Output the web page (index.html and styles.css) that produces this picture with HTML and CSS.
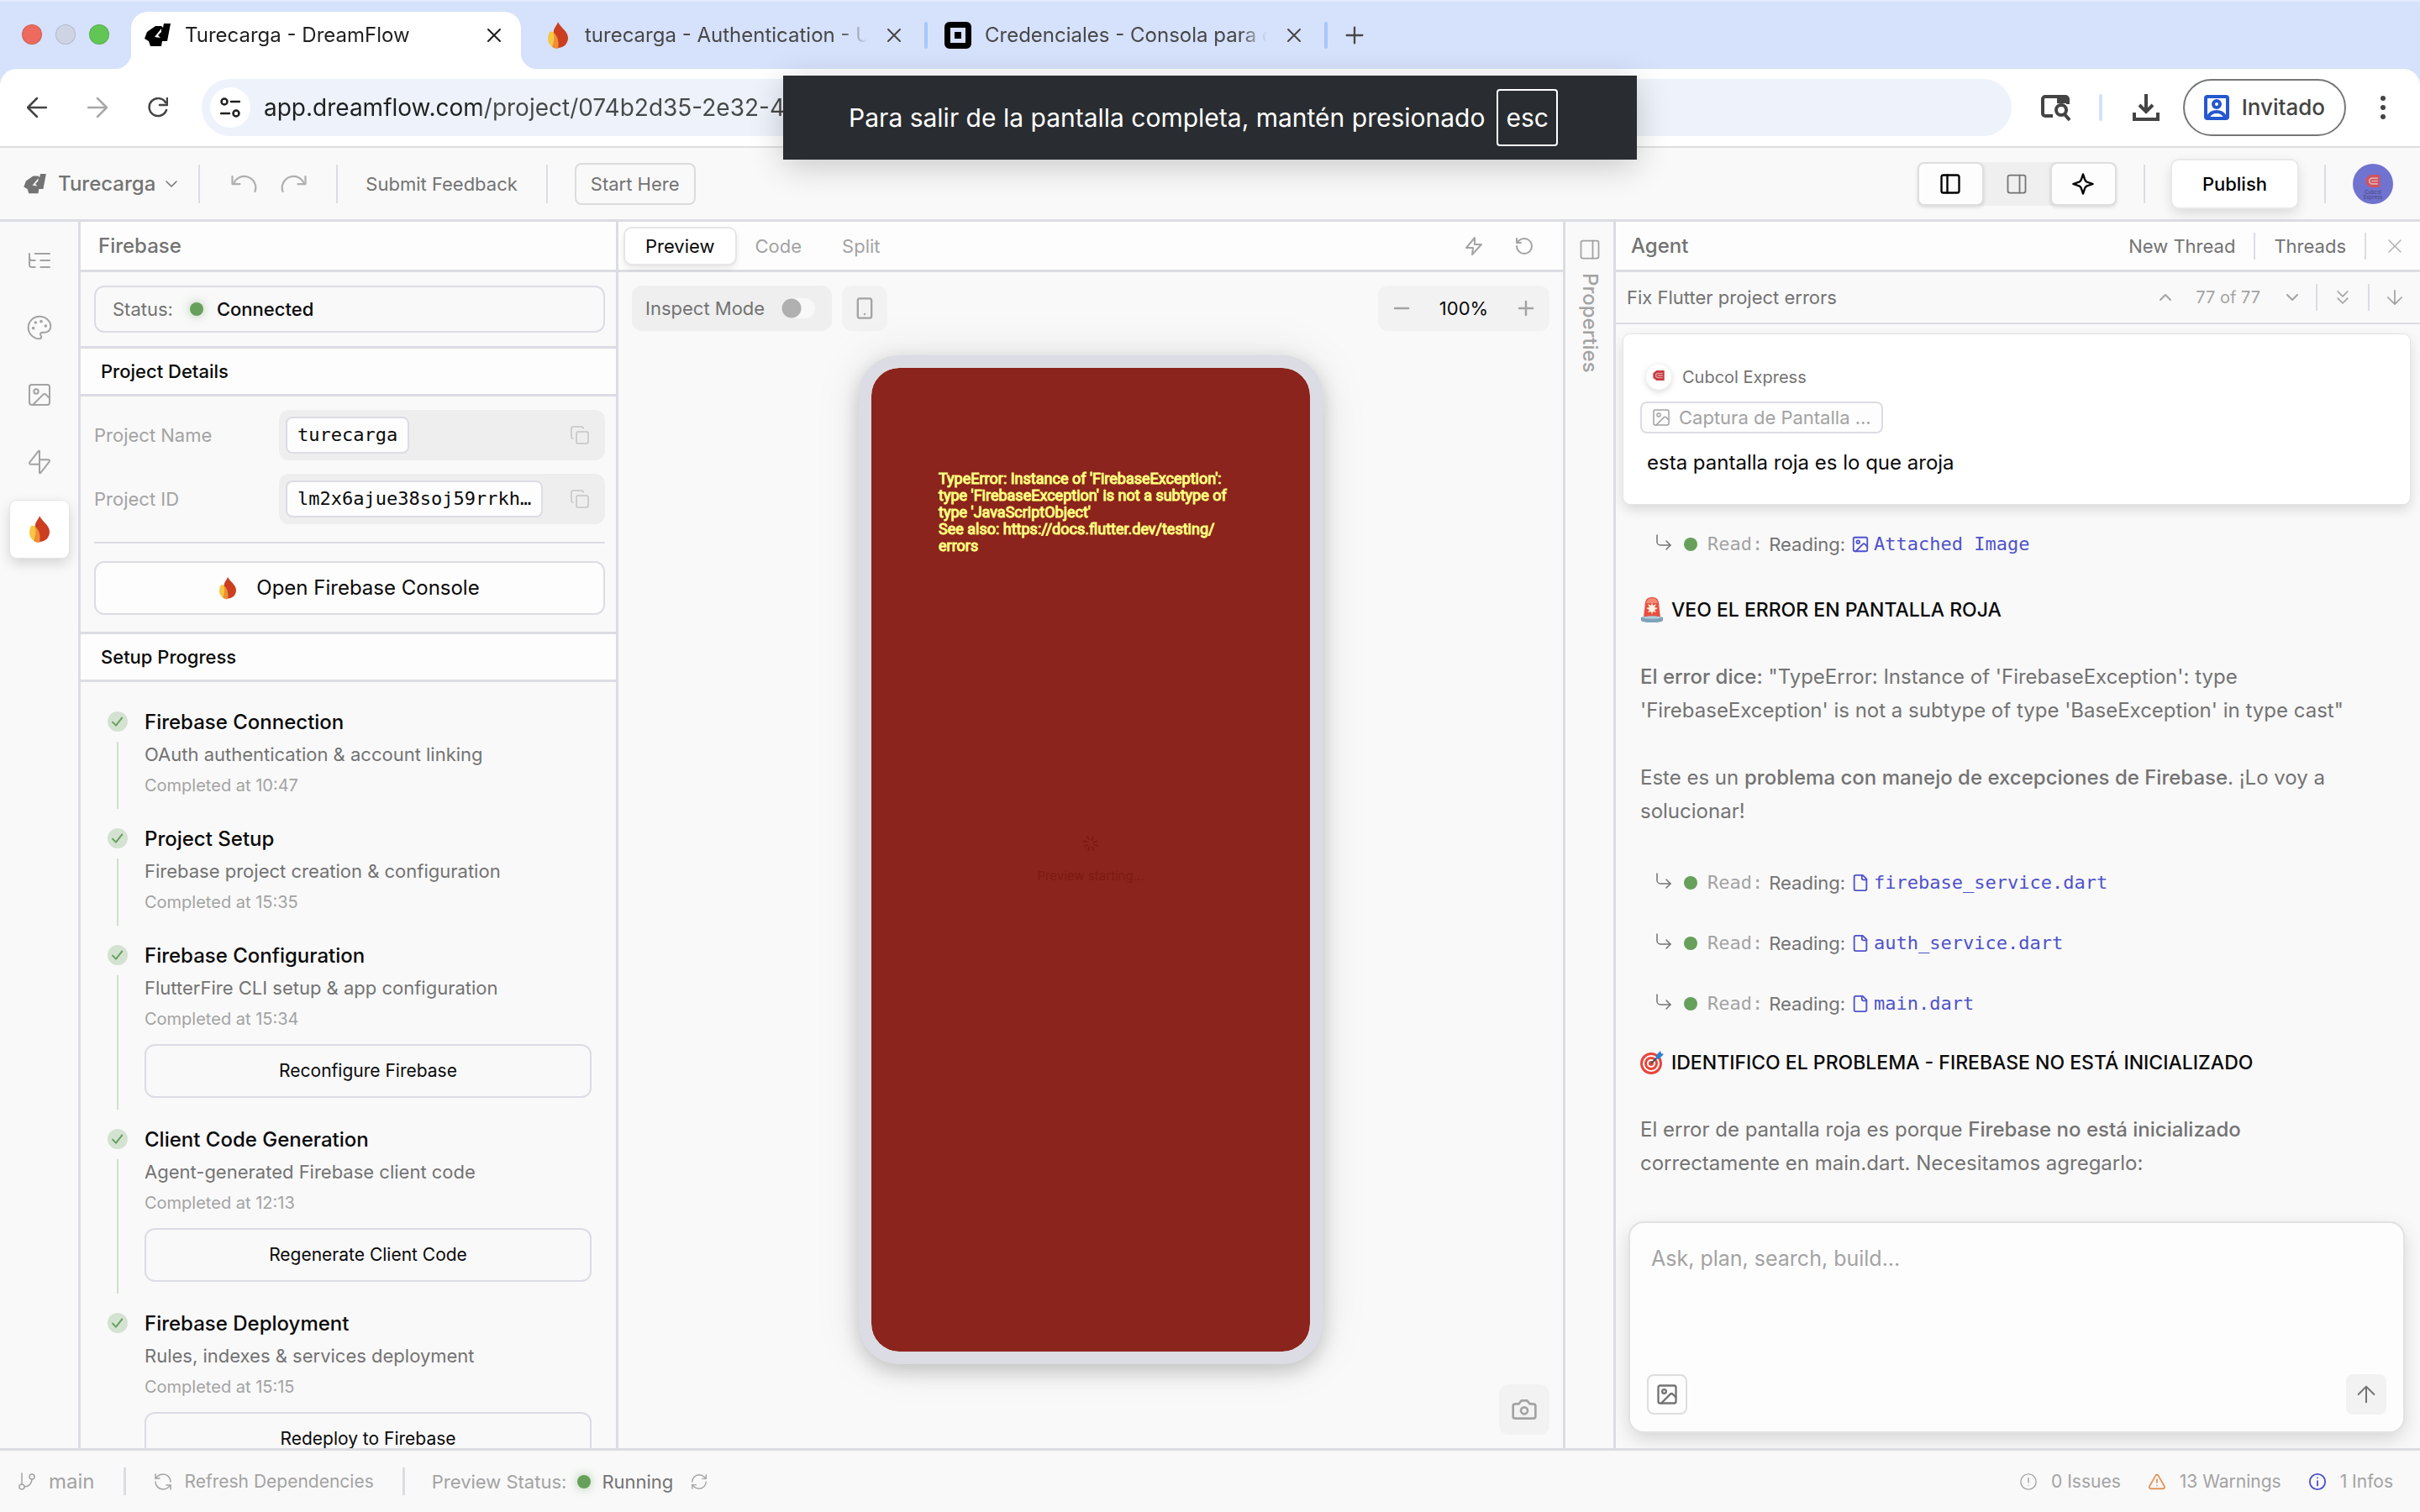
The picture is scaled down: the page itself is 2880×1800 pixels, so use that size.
FILE: index.html
```html
<!DOCTYPE html>
<html lang="es">
<head>
<meta charset="utf-8">
<title>Turecarga - DreamFlow</title>
<meta name="viewport" content="width=device-width, initial-scale=1">
<link rel="stylesheet" href="styles.css">
</head>
<body>
<svg class="sprite" aria-hidden="true">
  <symbol id="logo" viewBox="0 0 32 28"><path fill="currentColor" fill-rule="evenodd" d="M23 0h8l-4 21h-6l-1 6H7l-2-6-5-3L3 10l10-7h7l2 2zM20 6l-8 10 7 1-3-3 4-4z"/></symbol>
  <symbol id="flame" viewBox="0 0 24 32"><path fill="#f6c644" d="M2 12c3-1 7 0 9 3s3 11 1 17C5 31 0 27 0 20c0-3 1-6 2-8z"/><path fill="#cb3f20" d="M12 0c-1 5-6 7-5 14 3 3 5 9 5 17 7 0 12-5 12-12C24 11 15 7 12 0z"/><path fill="#ee8f35" d="M7 13c4 3 7 10 5 19-3 0-5-1-7-2 2-5 3-11 2-17z"/></symbol>
  <symbol id="close" viewBox="0 0 24 24"><path d="M5 5l14 14M19 5L5 19"/></symbol>
  <symbol id="plus" viewBox="0 0 24 24"><path d="M4 12h16M12 4v16"/></symbol>
  <symbol id="minus" viewBox="0 0 24 24"><path d="M4 12h16"/></symbol>
  <symbol id="back" viewBox="0 0 24 24"><path d="M23 12H2M12 1L1 12l11 11"/></symbol>
  <symbol id="forward" viewBox="0 0 24 24"><path d="M1 12h21M12 1l11 11-11 11"/></symbol>
  <symbol id="reload" viewBox="0 0 24 24"><path d="M22 15a10.500 10.500 0 1 1-1-9M23 0v9h-9"/></symbol>
  <symbol id="tune" viewBox="0 0 24 24"><circle cx="5" cy="5" r="3.500"/><path d="M13 5h10M1 19h10"/><circle cx="19" cy="19" r="3.500"/></symbol>
  <symbol id="tabsearch" viewBox="0 0 36 32"><path d="M15 26H6a3 3 0 0 1-3-3V6a3 3 0 0 1 3-3h24a3 3 0 0 1 3 3v6"/><path fill="currentColor" stroke="none" d="M20 3h14v8H20z"/><circle cx="25" cy="19" r="6"/><path d="M29 24l6 7"/></symbol>
  <symbol id="download" viewBox="0 0 32 32"><path d="M16 0v20M8 13l8 8 8-8M2 22v8h28v-8"/></symbol>
  <symbol id="guest" viewBox="0 0 30 30"><rect x="2" y="2" width="26" height="26" rx="2"/><circle cx="15" cy="11" r="4"/><path d="M5 26c4-8 16-8 20 0"/></symbol>
  <symbol id="dots" viewBox="0 0 8 28"><g fill="currentColor" stroke="none"><circle cx="4" cy="3" r="3"/><circle cx="4" cy="14" r="3"/><circle cx="4" cy="25" r="3"/></g></symbol>
  <symbol id="chevdown" viewBox="0 0 24 24"><path d="M6 9l6 6 6-6"/></symbol>
  <symbol id="chevup" viewBox="0 0 24 24"><path d="M6 15l6-6 6 6"/></symbol>
  <symbol id="chevs" viewBox="0 0 24 24"><path d="M7 6l5 5 5-5M7 13l5 5 5-5"/></symbol>
  <symbol id="arrowdown" viewBox="0 0 24 24"><path d="M12 5v14M19 12l-7 7-7-7"/></symbol>
  <symbol id="arrowup" viewBox="0 0 24 24"><path d="M12 19V5M5 12l7-7 7 7"/></symbol>
  <symbol id="undo" viewBox="0 0 24 24"><path d="M3 6v6h6"/><path d="M21 18a9 9 0 0 0-17-6"/></symbol>
  <symbol id="redo" viewBox="0 0 24 24"><path d="M21 6v6h-6"/><path d="M3 18a9 9 0 0 1 17-6"/></symbol>
  <symbol id="panelleft" viewBox="0 0 24 24"><rect x="3" y="3" width="18" height="18" rx="2"/><path d="M9 3v18"/></symbol>
  <symbol id="panelright" viewBox="0 0 24 24"><rect x="3" y="3" width="18" height="18" rx="2"/><path d="M15 3v18"/></symbol>
  <symbol id="sparkle" viewBox="0 0 24 24"><path d="M12 2l2 6a4 4 0 0 0 2 2l6 2-6 2a4 4 0 0 0-2 2l-2 6-2-6a4 4 0 0 0-2-2l-6-2 6-2a4 4 0 0 0 2-2z"/></symbol>
  <symbol id="tree" viewBox="0 0 24 24"><path d="M21 12h-8M21 6H8M21 18h-8M3 6v4c0 1.100.9 2 2 2h3M3 10v6c0 1.100.9 2 2 2h3"/></symbol>
  <symbol id="palette" viewBox="0 0 24 24"><circle cx="13.500" cy="6.500" r=".6"/><circle cx="17.500" cy="10.500" r=".6"/><circle cx="8.500" cy="7.500" r=".6"/><circle cx="6.500" cy="12.500" r=".6"/><path d="M12 2C6.500 2 2 6.500 2 12s4.500 10 10 10c.93 0 1.650-.75 1.650-1.690 0-.44-.18-.83-.44-1.120-.29-.29-.44-.65-.44-1.130a1.640 1.640 0 0 1 1.670-1.670h2c3.050 0 5.550-2.500 5.550-5.550C21.970 6.010 17.460 2 12 2z"/></symbol>
  <symbol id="image" viewBox="0 0 24 24"><rect x="3" y="3" width="18" height="18" rx="2"/><circle cx="9" cy="9" r="2"/><path d="M21 15l-3.100-3.100a2 2 0 0 0-2.800 0L6 21"/></symbol>
  <symbol id="bolts" viewBox="0 0 24 24"><path d="M12 14H4a1 1 0 0 1-.78-1.630L11 2.400a.5.5 0 0 1 1 .3zM12 10h8a1 1 0 0 1 .78 1.630L13 21.600a.5.5 0 0 1-1-.3zM12 10v4"/></symbol>
  <symbol id="bolt" viewBox="0 0 24 24"><path d="M13 2L3 14h8l-1 8 11-12h-8z"/></symbol>
  <symbol id="ccw" viewBox="0 0 24 24"><path d="M3 12a9 9 0 1 0 9-9 9.750 9.750 0 0 0-6.740 2.740L3 8"/><path d="M3 3v5h5"/></symbol>
  <symbol id="copy" viewBox="0 0 24 24"><rect x="8" y="8" width="14" height="14" rx="2"/><path d="M4 16c-1.100 0-2-.9-2-2V4c0-1.100.9-2 2-2h10c1.100 0 2 .9 2 2"/></symbol>
  <symbol id="check" viewBox="0 0 24 24"><path d="M20 5L9 19l-6-6"/></symbol>
  <symbol id="phone" viewBox="0 0 24 24"><rect x="5" y="2" width="14" height="20" rx="2"/><path d="M12 18h.01"/></symbol>
  <symbol id="camera" viewBox="0 0 24 24"><path d="M14.500 4h-5L7 7H4a2 2 0 0 0-2 2v9a2 2 0 0 0 2 2h16a2 2 0 0 0 2-2V9a2 2 0 0 0-2-2h-3z"/><circle cx="12" cy="13" r="3"/></symbol>
  <symbol id="file" viewBox="0 0 24 24"><path d="M15 2H6a2 2 0 0 0-2 2v16a2 2 0 0 0 2 2h12a2 2 0 0 0 2-2V7z"/><path d="M14 2v4a2 2 0 0 0 2 2h4"/></symbol>
  <symbol id="corner" viewBox="0 0 24 24"><path d="M15 8l5 5-5 5"/><path d="M4 1v8a4 4 0 0 0 4 4h12"/></symbol>
  <symbol id="branch" viewBox="0 0 24 24"><path d="M6 2v13"/><circle cx="18" cy="6" r="3"/><circle cx="6" cy="18" r="3"/><path d="M18 9a9 9 0 0 1-9 9"/></symbol>
  <symbol id="refreshccw" viewBox="0 0 24 24"><path d="M21 12a9 9 0 0 0-9-9 9.750 9.750 0 0 0-6.740 2.740L3 8"/><path d="M3 3v5h5M3 12a9 9 0 0 0 9 9 9.750 9.750 0 0 0 6.740-2.740L21 16"/><path d="M16 16h5v5"/></symbol>
  <symbol id="refreshcw" viewBox="0 0 24 24"><path d="M3 12a9 9 0 0 1 9-9 9.750 9.750 0 0 1 6.740 2.740L21 8"/><path d="M21 3v5h-5M21 12a9 9 0 0 1-9 9 9.750 9.750 0 0 1-6.740-2.740L3 16"/><path d="M8 16H3v5"/></symbol>
  <symbol id="alert" viewBox="0 0 24 24"><circle cx="12" cy="12" r="10"/><path d="M12 7v6M12 17h.01"/></symbol>
  <symbol id="warn" viewBox="0 0 24 24"><path d="M21.700 18l-8-14a2 2 0 0 0-3.500 0l-8 14A2 2 0 0 0 4 21h16a2 2 0 0 0 1.700-3zM12 9v4M12 17h.01"/></symbol>
  <symbol id="info" viewBox="0 0 24 24"><circle cx="12" cy="12" r="10"/><path d="M12 17v-6M12 7h.01"/></symbol>
  <symbol id="spinner" viewBox="0 0 24 24"><path d="M15 4l-1 4M20 9l-4 2M21 15l-4-1M16 21l-2-4M9 21l1-4M4 16l4-2M3 9l4 1M8 3l2 4"/></symbol>
  <symbol id="siren" viewBox="0 0 28 30"><path fill="#e8503f" d="M4 24L6 6c1-4 3-6 8-6s7 2 8 6l2 18z"/><path fill="#f58a76" d="M7 7c1-4 3-6 7-6s6 2 7 6z"/><path fill="#fff3e6" d="M14 6l1 4 4-2-2 4 4 1-4 2 2 3-4-1-1 4-1-4-4 1 2-3-4-2 4-1-2-4 4 2z"/><path fill="#7fa3bb" d="M1 24c4-2 22-2 26 0v4c-4 3-22 3-26 0z"/><path fill="#b6cedb" d="M2 24c5-2 19-2 24 0-5 2-19 2-24 0z"/></symbol>
  <symbol id="target" viewBox="0 0 28 28"><circle cx="13" cy="15" r="13" fill="#e8453a"/><circle cx="13" cy="15" r="10" fill="#fff"/><circle cx="13" cy="15" r="8" fill="#e8453a"/><circle cx="13" cy="15" r="5" fill="#fff"/><circle cx="13" cy="15" r="3" fill="#e8453a"/><path d="M13 15l8-8" stroke="#41546b" stroke-width="2"/><path fill="#2f7fd0" d="M19 5l5-5 1 3 3 1-5 5-4 1z"/></symbol>
  <symbol id="cubcol" viewBox="0 0 20 18"><path fill="currentColor" d="M6 0h14v18H6l-6-5V5z"/><path d="M17 5H8L5 7v4l3 2h9M8 9h9" fill="none" stroke="#fff" stroke-opacity=".5" stroke-width="2"/></symbol>
</svg>

<div class="app">
  <header class="browser">
    <div class="tabstrip">
      <div class="lights"><span class="light red"></span><span class="light idle"></span><span class="light green"></span></div>
      <div class="tab active"><svg class="favicon logo"><use href="#logo"/></svg><span class="tab-title">Turecarga - DreamFlow</span><button class="tab-close" aria-label="Cerrar"><svg class="ic i24 w2"><use href="#close"/></svg></button></div>
      <span class="tab-sep hidden"></span>
      <div class="tab"><svg class="favicon"><use href="#flame"/></svg><span class="tab-title">turecarga - Authentication - Usuarios</span><button class="tab-close" aria-label="Cerrar"><svg class="ic i24 w2"><use href="#close"/></svg></button></div>
      <span class="tab-sep"></span>
      <div class="tab"><span class="favicon square"></span><span class="tab-title">Credenciales - Consola para desarrolladores</span><button class="tab-close" aria-label="Cerrar"><svg class="ic i24 w2"><use href="#close"/></svg></button></div>
      <span class="tab-sep"></span>
      <button class="newtab" aria-label="Nueva pestaña"><svg class="ic i28 w2"><use href="#plus"/></svg></button>
    </div>
    <div class="toolbar">
      <button class="nav" aria-label="Atrás"><svg class="ic i24 w25"><use href="#back"/></svg></button>
      <button class="nav dim" aria-label="Adelante"><svg class="ic i24 w25"><use href="#forward"/></svg></button>
      <button class="nav" aria-label="Recargar"><svg class="ic i24 w25"><use href="#reload"/></svg></button>
      <div class="omnibox">
        <button class="site" aria-label="Información del sitio"><svg class="ic i24 w25"><use href="#tune"/></svg></button>
        <input class="url" type="text" aria-label="Dirección" value="app.dreamflow.com/project/074b2d35-2e32-4">
      </div>
      <button class="nav side" aria-label="Buscar"><svg class="ic tabsearch"><use href="#tabsearch"/></svg></button>
      <span class="bar-sep"></span>
      <button class="nav save" aria-label="Descargas"><svg class="ic i32 w4"><use href="#download"/></svg></button>
      <button class="profile"><svg class="ic guest"><use href="#guest"/></svg>Invitado</button>
      <button class="menu" aria-label="Menú"><svg class="ic dots"><use href="#dots"/></svg></button>
    </div>
    <div class="toast" role="status"><span>Para salir de la pantalla completa, mantén presionado</span><kbd>esc</kbd></div>
  </header>

  <nav class="topbar">
    <button class="project"><svg class="logo small"><use href="#logo"/></svg>Turecarga<svg class="ic i24"><use href="#chevdown"/></svg></button>
    <span class="vr"></span>
    <button class="tool undo" aria-label="Undo"><svg class="ic i36"><use href="#undo"/></svg></button>
    <button class="tool" aria-label="Redo"><svg class="ic i36"><use href="#redo"/></svg></button>
    <span class="vr"></span>
    <button class="plain">Submit Feedback</button>
    <span class="vr"></span>
    <button class="start">Start Here</button>
    <div class="segments">
      <button class="on" aria-label="Left panel"><svg class="ic i28 w2"><use href="#panelleft"/></svg></button>
      <button aria-label="Right panel"><svg class="ic i28"><use href="#panelright"/></svg></button>
      <button class="on" aria-label="Agent"><svg class="ic i28 w2"><use href="#sparkle"/></svg></button>
    </div>
    <span class="vr"></span>
    <button class="publish">Publish</button>
    <span class="vr"></span>
    <button class="avatar" aria-label="Account"><svg viewBox="0 0 48 48"><circle cx="24" cy="24" r="24" fill="#7073cf"/><use href="#cubcol" x="14" y="13" width="20" height="15" color="#cf5560"/><text x="24" y="36" text-anchor="middle" class="tiny">Cubcol</text><text x="24" y="42" text-anchor="middle" class="tiny">Express</text></svg></button>
  </nav>

  <main class="workspace">
    <aside class="rail">
      <button aria-label="Widget tree"><svg class="ic i32"><use href="#tree"/></svg></button>
      <button aria-label="Theme"><svg class="ic i32"><use href="#palette"/></svg></button>
      <button aria-label="Assets"><svg class="ic i32"><use href="#image"/></svg></button>
      <button aria-label="Backend"><svg class="ic i32"><use href="#bolts"/></svg></button>
      <button class="current" aria-label="Firebase"><svg class="flame-lg"><use href="#flame"/></svg></button>
    </aside>

    <section class="firebase">
      <h1 class="pane-head title">Firebase</h1>
      <div class="status-wrap"><div class="status"><span>Status:</span><i class="dot glow"></i><b>Connected</b></div></div>
      <h2 class="section">Project Details</h2>
      <div class="details">
        <div class="field"><span>Project Name</span><div class="value"><code>turecarga</code><button aria-label="Copy name"><svg class="ic i24"><use href="#copy"/></svg></button></div></div>
        <div class="field"><span>Project ID</span><div class="value"><code>lm2x6ajue38soj59rrkh…</code><button aria-label="Copy ID"><svg class="ic i24"><use href="#copy"/></svg></button></div></div>
        <hr>
        <button class="outline console"><svg class="flame-sm"><use href="#flame"/></svg>Open Firebase Console</button>
      </div>
      <h2 class="section">Setup Progress</h2>
      <ol class="steps">
        <li><span class="mark"><svg class="ic"><use href="#check"/></svg></span><div><h3>Firebase Connection</h3><p>OAuth authentication &amp; account linking</p><small>Completed at 10:47</small></div></li>
        <li><span class="mark"><svg class="ic"><use href="#check"/></svg></span><div><h3>Project Setup</h3><p>Firebase project creation &amp; configuration</p><small>Completed at 15:35</small></div></li>
        <li><span class="mark"><svg class="ic"><use href="#check"/></svg></span><div><h3>Firebase Configuration</h3><p>FlutterFire CLI setup &amp; app configuration</p><small>Completed at 15:34</small><button class="outline">Reconfigure Firebase</button></div></li>
        <li><span class="mark"><svg class="ic"><use href="#check"/></svg></span><div><h3>Client Code Generation</h3><p>Agent-generated Firebase client code</p><small>Completed at 12:13</small><button class="outline">Regenerate Client Code</button></div></li>
        <li><span class="mark"><svg class="ic"><use href="#check"/></svg></span><div><h3>Firebase Deployment</h3><p>Rules, indexes &amp; services deployment</p><small>Completed at 15:15</small><button class="outline">Redeploy to Firebase</button></div></li>
      </ol>
    </section>

    <section class="preview">
      <div class="pane-head tabs">
        <button class="mode on">Preview</button><button class="mode">Code</button><button class="mode">Split</button>
        <span class="grow"></span>
        <button class="act" aria-label="Hot reload"><svg class="ic i24 w2"><use href="#bolt"/></svg></button>
        <button class="act" aria-label="Restart"><svg class="ic i24 w2"><use href="#ccw"/></svg></button>
      </div>
      <div class="controls">
        <label class="inspect">Inspect Mode<input type="checkbox"></label>
        <button class="device" aria-label="Device"><svg class="ic i28 w2"><use href="#phone"/></svg></button>
        <span class="grow"></span>
        <div class="zoom"><button aria-label="Zoom out"><svg class="ic i24 w25"><use href="#minus"/></svg></button><span>100%</span><button aria-label="Zoom in"><svg class="ic i24 w25"><use href="#plus"/></svg></button></div>
      </div>
      <div class="phone">
        <p class="error">TypeError: Instance of 'FirebaseException': type 'FirebaseException' is not a subtype of type 'JavaScriptObject'<br>See also: https://docs.flutter.dev/testing/<wbr>errors</p>
        <div class="loading"><svg class="ic i22 w2"><use href="#spinner"/></svg><span>Preview starting...</span></div>
      </div>
      <div class="shot"><button aria-label="Screenshot"><svg class="ic i32 w2"><use href="#camera"/></svg></button></div>
    </section>

    <aside class="properties"><svg class="ic i28"><use href="#panelright"/></svg><span>Properties</span></aside>

    <section class="agent">
      <div class="pane-head agent-head"><h2>Agent</h2><button>New Thread</button><span class="vr short"></span><button>Threads</button><span class="vr short"></span><button class="x" aria-label="Close"><svg class="ic i24"><use href="#close"/></svg></button></div>
      <div class="thread"><h3>Fix Flutter project errors</h3><button aria-label="Previous"><svg class="ic i24 w2"><use href="#chevup"/></svg></button><span class="count">77 of 77</span><button aria-label="Next"><svg class="ic i24 w2"><use href="#chevdown"/></svg></button><span class="vr short"></span><button aria-label="Expand all"><svg class="ic i28"><use href="#chevs"/></svg></button><span class="vr short"></span><button aria-label="To the end"><svg class="ic i28"><use href="#arrowdown"/></svg></button></div>
      <div class="messages">
        <article class="card">
          <div class="author"><span class="face"><svg><use href="#cubcol"/></svg></span>Cubcol Express</div>
          <span class="attach"><svg class="ic i24"><use href="#image"/></svg>Captura de Pantalla ...</span>
          <p>esta pantalla roja es lo que aroja</p>
        </article>
        <div class="reply">
          <div class="tools">
            <div class="read"><svg class="ic i24"><use href="#corner"/></svg><i class="dot"></i><code>Read:</code><span>Reading:</span><a href="#image"><svg class="ic i22 w2"><use href="#image"/></svg>Attached Image</a></div>
          </div>
          <h4><svg class="emoji"><use href="#siren"/></svg>VEO EL ERROR EN PANTALLA ROJA</h4>
          <p><b>El error dice:</b> "TypeError: Instance of 'FirebaseException': type 'FirebaseException' is not a subtype of type 'BaseException' in type cast"</p>
          <p>Este es un <b>problema con manejo de excepciones de Firebase</b>. ¡Lo voy a solucionar!</p>
          <div class="tools">
            <div class="read"><svg class="ic i24"><use href="#corner"/></svg><i class="dot"></i><code>Read:</code><span>Reading:</span><a href="#file"><svg class="ic i22 w2"><use href="#file"/></svg>firebase_service.dart</a></div>
            <div class="read"><svg class="ic i24"><use href="#corner"/></svg><i class="dot"></i><code>Read:</code><span>Reading:</span><a href="#file"><svg class="ic i22 w2"><use href="#file"/></svg>auth_service.dart</a></div>
            <div class="read"><svg class="ic i24"><use href="#corner"/></svg><i class="dot"></i><code>Read:</code><span>Reading:</span><a href="#file"><svg class="ic i22 w2"><use href="#file"/></svg>main.dart</a></div>
          </div>
          <h4><svg class="emoji"><use href="#target"/></svg>IDENTIFICO EL PROBLEMA - FIREBASE NO ESTÁ INICIALIZADO</h4>
          <p>El error de pantalla roja es porque <b>Firebase no está inicializado</b> correctamente en main.dart. Necesitamos agregarlo:</p>
        </div>
      </div>
      <form class="composer">
        <textarea placeholder="Ask, plan, search, build..." aria-label="Message"></textarea>
        <div class="composer-row"><button type="button" class="pic" aria-label="Attach image"><svg class="ic i28 w2"><use href="#image"/></svg></button><button type="button" class="send" aria-label="Send"><svg class="ic i32"><use href="#arrowup"/></svg></button></div>
      </form>
    </section>
  </main>

  <footer class="statusbar">
    <button><svg class="ic i24"><use href="#branch"/></svg><span class="branch">main</span></button>
    <span class="vr wide"></span>
    <button><svg class="ic i24"><use href="#refreshccw"/></svg>Refresh Dependencies</button>
    <span class="vr wide"></span>
    <div class="run">Preview Status:<i class="dot glow"></i><span>Running</span><svg class="ic i22"><use href="#refreshcw"/></svg></div>
    <span class="grow"></span>
    <button class="tally"><svg class="ic i22"><use href="#alert"/></svg>0 Issues</button>
    <button class="tally"><svg class="ic i22 orange w2"><use href="#warn"/></svg>13 Warnings</button>
    <button class="tally"><svg class="ic i22 blue w2"><use href="#info"/></svg>1 Infos</button>
  </footer>
</div>
</body>
</html>
```
FILE: styles.css
```css
:root {
  --line: #dcdce4;
  --bg: #f9f9f9;
  --pane: #fdfdfd;
  --text: #0a0a0a;
  --grey: #737373;
  --muted: #a3a3a3;
  --green: #66a05b;
  --mono: "DejaVu Sans Mono", monospace;
}
* { box-sizing: border-box; }
body { margin: 0; background: var(--bg); color: var(--grey); font: 22px/28px Inter, sans-serif; }
h1, h2, h3, h4, p, ol { margin: 0; padding: 0; font-size: inherit; font-weight: 500; }
p, ol { font-weight: 400; }
button { font: inherit; color: inherit; background: none; border: 0; padding: 0; margin: 0; display: flex; align-items: center; justify-content: center; white-space: nowrap; }
i, b { font-style: normal; font-weight: 500; }
.sprite { position: absolute; width: 0; height: 0; }
.ic { fill: none; stroke: currentColor; stroke-width: 1.5; stroke-linecap: round; stroke-linejoin: round; flex: none; display: block; }
.w2 { stroke-width: 2; }
.w25 { stroke-width: 2.5; }
.w4 { stroke-width: 4; stroke-linecap: butt; stroke-linejoin: miter; }
.i22 { width: 22px; height: 22px; }
.i24 { width: 24px; height: 24px; }
.i28 { width: 28px; height: 28px; }
.i32 { width: 32px; height: 32px; }
.i36 { width: 36px; height: 36px; }
.grow { flex: 1; }
.vr { width: 2px; height: 46px; background: var(--line); flex: none; }
.vr.short { height: 32px; }
.dot { width: 16px; height: 16px; border-radius: 50%; background: var(--green); flex: none; }
.dot.glow { box-shadow: 0 0 12px rgba(102, 160, 91, .5); }

.app { height: 100vh; display: grid; grid-template-rows: auto auto minmax(0, 1fr) auto; }

/* Browser window */
.browser { position: relative; background: #d6e1fb; z-index: 2; }
.tabstrip { display: flex; align-items: stretch; height: 82px; padding-top: 12px; border-top: 2px solid #e4ebfc; gap: 4px; }
.lights { display: flex; gap: 16px; padding: 15px 22px 0 26px; }
.light { width: 24px; height: 24px; border-radius: 50%; border: 1px solid rgba(0, 0, 0, .12); }
.red { background: #ed6a5f; }
.idle { background: #ced4e3; }
.green { background: #62c655; }
.tab { position: relative; display: flex; align-items: center; gap: 16px; width: 464px; padding: 0 16px 12px; color: #474747; font-size: 24px; }
.tab.active { background: #fff; border-radius: 20px 20px 0 0; color: #1f1f1f; }
.tab.active::before, .tab.active::after { content: ""; position: absolute; bottom: 0; width: 20px; height: 20px; }
.tab.active::before { right: 100%; background: radial-gradient(circle at 0 0, transparent 20px, #fff 21px); }
.tab.active::after { left: 100%; background: radial-gradient(circle at 100% 0, transparent 20px, #fff 21px); }
.favicon { width: 32px; height: 32px; flex: none; }
.favicon.logo { color: #000; height: 28px; }
.square { border: 7px solid #000; border-radius: 6px; padding: 5px; background: #000 content-box; box-shadow: inset 0 0 0 3px #d6e1fb; }
.tab-title { flex: 1; min-width: 0; overflow: hidden; white-space: nowrap; mask-image: linear-gradient(to left, transparent 0, #000 32px); }
.tab-close { width: 32px; height: 32px; flex: none; }
.tab-sep { width: 4px; height: 32px; margin-top: 12px; border-radius: 2px; background: #a8c7fa; }
.tab-sep.hidden { background: none; }
.newtab { width: 56px; color: #474747; padding-bottom: 12px; }
.toolbar { display: flex; align-items: center; height: 94px; padding: 0 24px 0 20px; background: #fff; border-bottom: 2px solid #dfdfdf; border-radius: 20px 20px 0 0; color: #444; }
.nav { width: 48px; height: 48px; margin-right: 24px; }
.nav.dim { color: #a8a8a8; }
.omnibox { flex: 1; display: flex; align-items: center; gap: 16px; height: 68px; margin-left: 4px; padding: 0 10px; border-radius: 34px; background: #edf2fb; }
.site { width: 48px; height: 48px; border-radius: 50%; background: #fff; color: #1f1f1f; }
.url { flex: 1; min-width: 0; border: 0; padding: 0; outline: 0; font: 28px/36px Inter, sans-serif; color: #474747; background: linear-gradient(90deg, #1f1f1f 258px, #474747 258px); background-clip: text; -webkit-text-fill-color: transparent; }
.nav.side { margin: 0 28px; }
.tabsearch { width: 36px; height: 32px; stroke-width: 4; stroke-linecap: butt; }
.bar-sep { width: 4px; height: 32px; border-radius: 2px; background: #d3e1fb; margin-right: 28px; }
.nav.save { margin-right: 20px; }
.profile { gap: 15px; height: 68px; padding: 0 23px; border: 2px solid #747775; border-radius: 34px; font-size: 26px; font-weight: 500; }
.guest { width: 30px; height: 30px; color: #2558cf; stroke-width: 4; }
.menu { width: 40px; height: 48px; margin-left: 24px; }
.dots { width: 8px; height: 28px; }
.toast { position: absolute; left: 50%; top: 90px; transform: translateX(-50%); display: flex; align-items: center; justify-content: center; gap: 14px; width: 1016px; height: 100px; padding-right: 16px; background: #292c30; color: #fff; font-size: 30px; white-space: nowrap; box-shadow: 0 8px 40px rgba(0, 0, 0, .2); }
.toast kbd { font: inherit; height: 68px; line-height: 64px; padding: 0 9px; border: 2px solid #fff; border-radius: 4px; }

/* Editor top bar */
.topbar { display: flex; align-items: center; height: 88px; padding: 0 32px 0 28px; border-bottom: 3px solid var(--line); }
.logo.small { width: 28px; height: 24px; }
.project { gap: 13px; font-size: 24px; font-weight: 500; margin-right: 20px; }
.project .ic { margin-left: -6px; }
.tool { color: #b0b0b0; margin-left: 24px; }
.undo { margin-left: 34px; }
.topbar .tool + .vr { margin-left: 32px; margin-right: 33px; }
.plain { margin-right: 34px; }
.start { height: 50px; padding: 0 17px; margin-left: 32px; border: 2px solid #dcdcdc; border-radius: 8px; }
.segments { display: flex; margin-left: auto; margin-right: 32px; background: #efefef; border-radius: 12px; }
.segments button { width: 79px; height: 52px; border-radius: 8px; }
.segments .on { background: var(--pane); color: #000; border: 2px solid #dedede; box-shadow: 0 2px 4px rgba(0, 0, 0, .12); }
.publish { height: 56px; padding: 0 36px; margin: 0 32px; background: #fff; color: #000; font-weight: 500; border-radius: 8px; box-shadow: 0 0 0 2px #e8e8e8, 0 6px 16px rgba(0, 0, 0, .14); }
.avatar { width: 48px; height: 48px; margin-left: 32px; }
.avatar svg { width: 48px; height: 48px; }
.tiny { font-size: 6px; fill: #44467a; }

/* Workspace */
.workspace { display: grid; grid-template-columns: 96px 640px minmax(0, 1fr) 60px 957px; min-height: 0; }
.workspace > * { min-height: 0; overflow: hidden; border-right: 3px solid var(--line); }
.workspace > .agent { border-right: 0; }
.pane-head { display: flex; align-items: center; height: 60px; flex: none; background: var(--pane); border-bottom: 3px solid var(--line); }
.rail { display: flex; flex-direction: column; align-items: center; gap: 12px; padding-top: 12px; color: var(--muted); }
.rail button { width: 70px; height: 68px; }
.rail .current { background: #fff; border-radius: 8px; box-shadow: 0 0 0 1px #e4e4e4, 0 6px 16px rgba(0, 0, 0, .16); }
.flame-lg { width: 24px; height: 32px; }
.flame-sm { width: 20px; height: 28px; }

.firebase { display: flex; flex-direction: column; }
.title { padding-left: 21px; font-size: 24px; font-weight: 500; }
.status-wrap { padding: 16px 13px 16px 16px; }
.status { display: flex; align-items: center; height: 56px; padding: 0 20px; border: 2px solid var(--line); border-radius: 12px; }
.status .dot { margin: 0 16px 0 20px; }
.status b { color: var(--text); }
.section { display: flex; align-items: center; height: 60px; flex: none; padding-left: 24px; background: var(--pane); border: solid var(--line); border-width: 3px 0; color: var(--text); }
.details { display: flex; flex-direction: column; gap: 16px; padding: 16px 13px 20px 16px; }
.field { display: flex; align-items: center; color: var(--muted); }
.field > span { width: 220px; }
.value { flex: 1; display: flex; align-items: center; justify-content: space-between; height: 60px; padding: 0 18px 0 8px; border-radius: 12px; background: #eee; color: #c4c4c4; }
.value code { height: 44px; padding: 0 12px; border: 2px solid var(--line); border-radius: 8px; background: var(--pane); color: var(--text); font: 22px/40px var(--mono); }
.details hr { width: 100%; height: 2px; margin: 5px 0; border: 0; background: var(--line); }
.outline { width: 100%; height: 64px; border: 2px solid var(--line); border-radius: 12px; color: var(--text); font-size: 21px; }
.console { gap: 24px; font-size: 24px; background: var(--pane); }
.steps { list-style: none; padding: 35px 29px 0 32px; }
.steps li { display: grid; grid-template-columns: 24px 1fr; column-gap: 20px; margin-bottom: 23px; }
.steps li > div { padding-bottom: 16px; }
.steps li > div:has(button) { padding-bottom: 14px; }
.mark { display: flex; align-items: center; flex-direction: column; gap: 12px; color: var(--green); }
.mark .ic { width: 24px; height: 24px; padding: 4px; border-radius: 50%; background: #d4e2d1; stroke-width: 3; }
.mark::after { content: ""; width: 2px; flex: 1; background: #cfe0cb; }
.steps li:last-child .mark::after { display: none; }
.steps h3 { font-size: 24px; line-height: 26px; color: var(--text); }
.steps p { line-height: 26px; margin: 12px 0; }
.steps small { display: block; font-size: 20px; line-height: 24px; color: var(--muted); }
.steps button { margin-top: 18px; }

.preview { display: flex; flex-direction: column; }
.tabs { padding: 0 24px 0 8px; color: var(--muted); }
.mode { height: 42px; padding: 0 24px; border-radius: 8px; }
.mode.on { background: #fff; color: var(--text); box-shadow: 0 0 0 2px #e6e6e6, 0 4px 8px rgba(0, 0, 0, .12); }
.act { width: 44px; margin-left: 16px; }
.controls { display: flex; gap: 12px; padding: 16px; }
.inspect, .device, .zoom { display: flex; align-items: center; height: 54px; border-radius: 12px; background: #f2f2f2; }
.inspect { gap: 20px; padding: 0 20px 0 16px; background: #efefef; }
.inspect input { appearance: none; width: 40px; height: 24px; margin: 0; border-radius: 12px; background: radial-gradient(circle at 12px 12px, #b0b0b0 11px, transparent 12px) #f8f8f8; }
.device { width: 54px; color: var(--muted); }
.zoom { width: 204px; padding: 0 16px; justify-content: space-between; color: var(--text); }
.zoom button { color: var(--muted); }
.phone { flex: 1; display: flex; flex-direction: column; width: 552px; margin: 13px auto 24px; border: 15px solid var(--line); border-radius: 48px; background: #8b241c; background-clip: padding-box; box-shadow: 0 8px 24px rgba(0, 0, 0, .2), 0 0 60px rgba(0, 0, 0, .08); }
.error { padding: 122px 80px 0; color: #ffff80; font: 400 18px/20px Roboto, sans-serif; -webkit-text-stroke: 1px #ffff80; }
.loading { flex: 1; display: flex; flex-direction: column; align-items: center; gap: 14px; padding-top: 333px; color: #7d1913; font-size: 15px; }
.shot { display: flex; justify-content: flex-end; padding: 0 16px 16px; color: var(--muted); }
.shot button { width: 60px; height: 60px; border-radius: 12px; background: #f2f2f2; }

.properties { display: flex; flex-direction: column; align-items: center; gap: 14px; padding-top: 19px; color: var(--muted); }
.properties span { writing-mode: vertical-rl; font-size: 24px; font-weight: 500; }

.agent { display: flex; flex-direction: column; }
.agent-head { padding: 0 18px; gap: 22px; }
.agent-head h2 { flex: 1; font-size: 24px; }
.agent-head button.x { color: #b0b0b0; }
.thread { display: flex; align-items: center; height: 62px; flex: none; padding: 0 16px 0 13px; border-bottom: 2px solid var(--line); gap: 16px; color: var(--muted); }
.thread h3 { flex: 1; font-weight: 400; color: var(--grey); }
.count { font-size: 20px; margin: 0 10px 0 8px; }
.messages { flex: 1; min-height: 0; overflow: hidden; padding: 12px 12px 0 9px; }
.card { padding: 36px 20px 31px; border-radius: 8px; background: #fff; box-shadow: 0 0 0 1px #e4e4e4, 0 6px 16px rgba(0, 0, 0, .14); }
.author { display: flex; align-items: center; gap: 13px; margin-left: 7px; font-size: 20px; line-height: 30px; }
.face { display: flex; justify-content: center; padding-top: 7px; width: 30px; height: 30px; border-radius: 50%; background: #fff; color: #c93a41; box-shadow: 0 2px 8px rgba(0, 0, 0, .16); }
.face svg { width: 14px; height: 12px; }
.attach { display: inline-flex; align-items: center; gap: 9px; height: 38px; margin-top: 14px; padding: 0 12px 0 11px; border: 2px solid var(--line); border-radius: 8px; background: var(--pane); color: var(--muted); }
.card p { margin: 17px 8px 0; font-size: 24px; line-height: 36px; color: var(--text); }
.reply { padding: 28px 60px 28px 20px; font-size: 24px; line-height: 40px; }
.reply p { margin-top: 40px; }
.reply h4 { display: flex; align-items: center; gap: 9px; font-size: 23px; color: var(--text); }
.emoji { width: 28px; height: 30px; flex: none; }
.tools { display: grid; gap: 32px; margin: 45px 0 30px; }
.tools:first-child { margin: 0 0 38px; }
.read { display: flex; align-items: center; padding-left: 16px; font-size: 22px; }
.read .dot { margin: 0 12px; }
.read code, .read a { font: 22px/40px var(--mono); color: var(--muted); }
.read span { margin: 0 7px; }
.read a { display: flex; align-items: center; gap: 5px; color: #4f52cb; text-decoration: none; }
.composer { display: flex; flex-direction: column; height: 248px; flex: none; margin: 0 20px 20px 17px; padding: 24px 20px 20px; border-radius: 16px; background: var(--pane); box-shadow: 0 0 0 2px #e2e2e2, 0 8px 24px rgba(0, 0, 0, .16); }
.composer textarea { flex: 1; resize: none; border: 0; outline: 0; padding: 0 5px; background: none; font: 25px/36px Inter, sans-serif; color: var(--text); }
.composer textarea::placeholder { color: var(--muted); }
.composer-row { display: flex; justify-content: space-between; }
.composer-row button { width: 48px; height: 48px; border-radius: 8px; }
.pic { border: 2px solid #dedede; }
.send { background: #f2f2f2; }

/* Status bar */
.statusbar { display: flex; align-items: center; height: 76px; padding: 0 32px 0 20px; border-top: 3px solid var(--line); color: var(--muted); }
.statusbar .vr { width: 3px; height: 33px; margin: 0 32px 0 34px; }
.statusbar button { gap: 14px; font-size: 21px; }
.statusbar .branch { font-size: 24px; }
.run { display: flex; align-items: center; }
.run .dot { margin: 0 13px; }
.run span { color: var(--grey); margin-right: 20px; }
.statusbar .tally { gap: 16px; margin-left: 32px; }
.orange { color: #e0955a; }
.blue { color: #4f52cb; }
```
